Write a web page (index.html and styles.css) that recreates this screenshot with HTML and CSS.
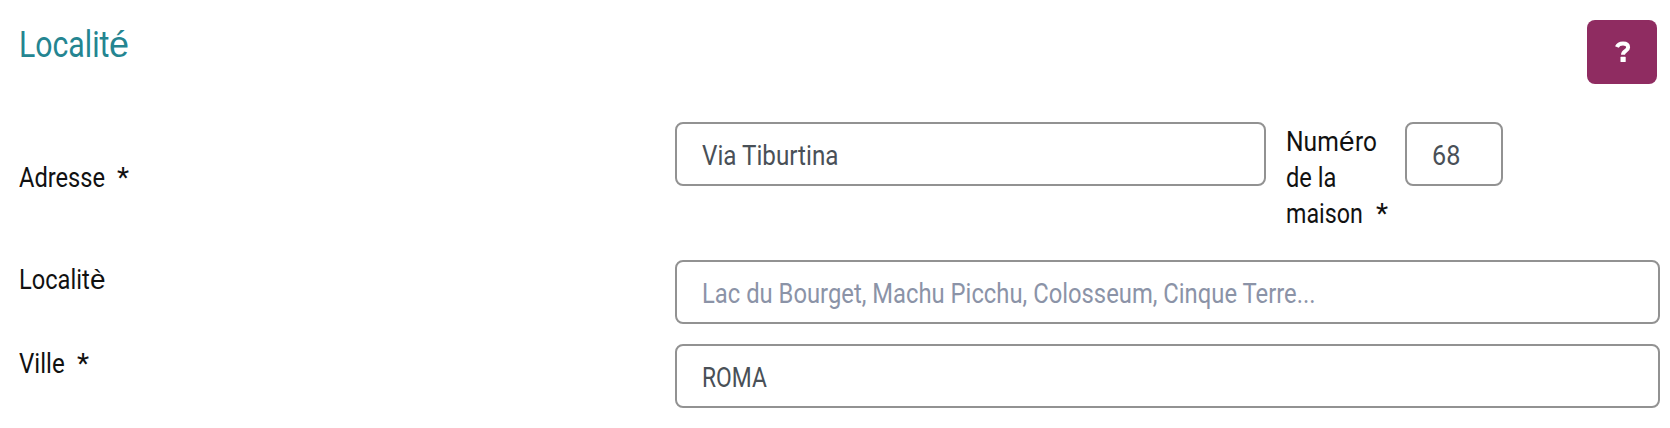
FILE: index.html
```html
<!DOCTYPE html>
<html lang="fr">
<head>
<meta charset="utf-8">
<title>Localité</title>
<link rel="stylesheet" href="styles.css">
</head>
<body>
<main class="form">
  <header class="head">
    <h1 class="title"><span class="t t-title">Localit</span><span class="acc">é</span></h1>
    <button class="help" type="button" aria-label="Aide"><svg width="16" height="22" viewBox="0 0 16 22"><path d="M1.9 6.1C2.9 3.7 5 2.6 8 2.6c3.3 0 5.1 1.5 5.1 3.8 0 3.8-5.1 3.3-5.1 7.4" fill="none" stroke="#fff" stroke-width="4"/><rect x="5.5" y="15.8" width="5.2" height="5.2" rx=".6" fill="#fff"/></svg></button>
  </header>
  <div class="row row-address">
    <div class="label"><span class="t t-adresse">Adresse</span><span class="star">*</span></div>
    <div class="field street"><span class="t t-via">Via Tiburtina</span></div>
    <div class="label number-label">
      <div><span class="t t-num">Num</span><span class="acc">é</span><span class="t t-ro">ro</span></div>
      <div><span class="t t-dela">de la</span></div>
      <div><span class="t t-maison">maison</span><span class="star">*</span></div>
    </div>
    <div class="field number"><span class="t t-68">68</span></div>
  </div>
  <div class="row">
    <div class="label"><span class="t t-localite">Localit</span><span class="acc">è</span></div>
    <div class="field placeholder"><span class="t t-lac">Lac du Bourget, Machu Picchu, Colosseum, Cinque Terre...</span></div>
  </div>
  <div class="row">
    <div class="label"><span class="t t-ville">Ville</span><span class="star">*</span></div>
    <div class="field"><span class="t t-roma">ROMA</span></div>
  </div>
</main>
</body>
</html>
```
FILE: styles.css
```css
* { box-sizing: border-box; }
body { margin: 0; background: #fff; font: 28px/36px Roboto, sans-serif; color: #111; }
.form { padding: 20px 10px 0 19px; }
.head { display: flex; justify-content: space-between; height: 102px; padding-right: 3px; }
.title { margin: 0; padding-top: 1px; font-size: 36px; line-height: 48px; font-weight: 400; color: #248591; }
.help { width: 70px; height: 64px; border: 0; border-radius: 8px; background: #8f2c61; display: flex; align-items: center; justify-content: center; padding: 0 0 0 2px; }
.row { display: grid; grid-template-columns: 656px 1fr; height: 84px; }
.row-address { grid-template-columns: 656px 591px 139px 98px; height: 138px; }
.label { white-space: nowrap; padding-top: 2px; }
.row-address > .label { padding-top: 38px; }
.row-address > .number-label { padding: 2px 0 0 20px; }
.field { height: 64px; border: 2px solid #929292; border-radius: 8px; padding: 15px 0 0 25px; line-height: 34px; color: #495057; white-space: nowrap; }
.placeholder { color: #8b93a7; }

/* Condensed letterforms: each box keeps the advance of its narrowed text. */
.t { display: inline-block; transform-origin: left; transform: scaleX(.845); }
.t-title { width: 90px; transform: scaleX(.84); }
.t-adresse { width: 86px; }
.t-via { width: 136px; transform: scaleX(.865); }
.t-num { width: 53px; transform: scaleX(.88); }
.t-ro { width: 22px; transform: scaleX(.87); }
.t-maison { width: 78px; transform: scaleX(.83); }
.t-68 { width: 29px; transform: scaleX(.9); }
.t-localite { width: 71px; }
.t-lac { width: 613px; transform: scaleX(.85); }
.t-ville { width: 46px; transform: scaleX(.86); }
.t-roma { width: 64px; transform: scaleX(.815); }
.acc { font-family: "Liberation Sans", sans-serif; }
.star { margin-left: 12px; }
```
